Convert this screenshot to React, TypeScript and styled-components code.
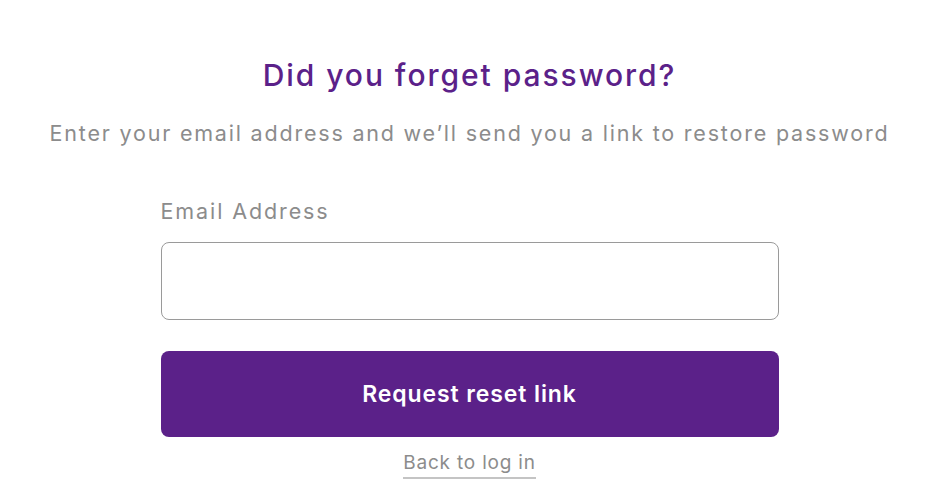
import React from 'react';
import styled, { createGlobalStyle } from 'styled-components';

const GlobalStyle = createGlobalStyle`
  body {
    margin: 0;
    background: #ffffff;
    font-family: Inter, "Noto Sans", sans-serif;
  }
`;

const App: React.FC = () => {
  return (
    <>
      <GlobalStyle />
      <Page>
        <Title>Did you forget password?</Title>
        <Subtitle>Enter your email address and we’ll send you a link to restore password</Subtitle>
        <Form onSubmit={(e) => e.preventDefault()}>
          <Label htmlFor="email">Email Address</Label>
          <Input id="email" type="email" />
          <SubmitButton type="submit">Request reset link</SubmitButton>
          <BackLink href="#">Back to log in</BackLink>
        </Form>
      </Page>
    </>
  );
};

export default App;

const Page = styled.div`
  display: flex;
  flex-direction: column;
  align-items: center;
  padding-top: 55px;
`;

const Title = styled.h1`
  margin: 0;
  font-size: 30px;
  line-height: 40px;
  font-weight: 500;
  color: #5b2189;
  letter-spacing: 1.95px;
`;

const Subtitle = styled.p`
  margin: 23px 0 0;
  font-size: 21.5px;
  line-height: 30px;
  font-weight: 400;
  color: #8c8c8c;
  letter-spacing: 1.8px;
  white-space: nowrap;
`;

const Form = styled.form`
  width: 618px;
  display: flex;
  flex-direction: column;
  margin-top: 48px;
`;

const Label = styled.label`
  font-size: 21.5px;
  line-height: 30px;
  color: #8c8c8c;
  letter-spacing: 1.9px;
`;

const Input = styled.input`
  box-sizing: border-box;
  margin-top: 16px;
  height: 78px;
  width: 100%;
  border: 1px solid #9a9a9a;
  border-radius: 8px;
  padding: 0 20px;
  font-size: 20px;
  font-family: inherit;
  outline: none;
`;

const SubmitButton = styled.button`
  margin-top: 31px;
  height: 86px;
  width: 100%;
  border: none;
  border-radius: 8px;
  background: #5b2189;
  color: #ffffff;
  font-family: inherit;
  font-size: 23px;
  font-weight: 600;
  letter-spacing: 0.9px;
  cursor: pointer;
`;

const BackLink = styled.a`
  align-self: center;
  margin-top: 12px;
  font-size: 19px;
  line-height: 28px;
  color: #8c8c8c;
  letter-spacing: 0.8px;
  text-decoration: none;
  border-bottom: 2px solid #c4c4c4;
`;
